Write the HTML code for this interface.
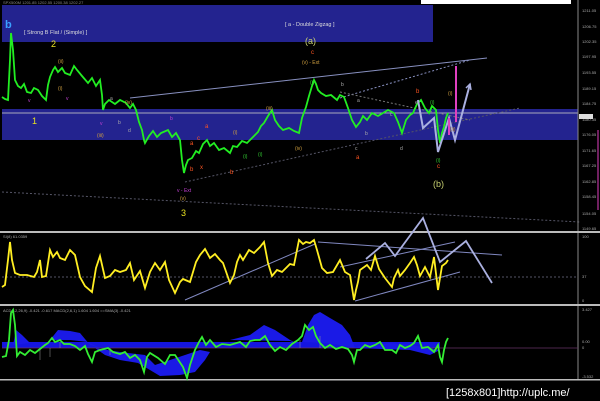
<!DOCTYPE html>
<html><head><meta charset="utf-8"><style>
html,body{margin:0;padding:0;background:#000;width:600px;height:401px;overflow:hidden}
svg{display:block}
text{font-family:"Liberation Sans",sans-serif}
</style></head><body>
<svg width="600" height="401" viewBox="0 0 600 401" xmlns="http://www.w3.org/2000/svg">
<rect width="600" height="401" fill="#000"/>
<!-- top header text -->
<text x="3" y="4" font-size="4" fill="#888">SPX500M  1201.85 1202.55 1200.38 1202.27</text>
<rect x="421" y="0" width="150" height="4" fill="#fff"/>
<!-- top blue box -->
<rect x="2" y="5" width="431" height="37" fill="#23238f"/>
<!-- blue band -->
<rect x="2" y="109" width="576" height="31" fill="#23238f"/>
<line x1="2" y1="113" x2="578" y2="113" stroke="#aab" stroke-width="1"/>
<!-- trend lines -->
<line x1="130" y1="98" x2="487" y2="58" stroke="#8890c0" stroke-width="1"/>
<line x1="340" y1="98" x2="470" y2="60" stroke="#8890c0" stroke-width="1" stroke-dasharray="2,2"/>
<line x1="2" y1="192" x2="580" y2="222" stroke="#556" stroke-width="1" stroke-dasharray="2,2"/>
<line x1="185" y1="182" x2="520" y2="108" stroke="#556" stroke-width="1" stroke-dasharray="2,2"/>
<line x1="340" y1="92" x2="470" y2="120" stroke="#777" stroke-width="1" stroke-dasharray="2,2"/>
<!-- price -->
<polyline fill="none" stroke="#22ee22" stroke-width="1.8" points="2,97 5,99 8,100 10,60 11,33 13,50 15,80 18,86 21,88 24,84 27,92 31,93 34,88 38,90 42,96 46,100 48,85 50,77 53,70 55,67 58,72 62,68 65,73 70,75 74,66 77,70 82,76 88,83 92,78 96,86 100,80 102,95 103,110 105,104 109,100 115,104 120,100 126,103 130,108 133,104 136,110 139,122 142,130 144,140 145,143 149,136 153,131 157,137 161,133 168,130 172,137 176,133 180,140 182,160 184,173 186,165 188,160 192,158 196,151 199,153 203,144 207,140 210,146 214,143 219,150 224,148 230,153 233,146 237,147 242,141 247,143 253,137 258,132 261,126 264,123 268,116 272,110 275,120 279,126 283,130 289,128 294,131 299,133 302,118 306,107 309,96 312,86 314,80 316,84 318,90 321,93 326,96 331,95 337,100 340,95 344,97 348,108 352,120 356,127 360,122 363,116 367,120 372,113 378,116 383,113 388,110 394,113 398,122 402,133 406,120 410,115 413,113 417,104 421,100 425,108 429,113 432,106 436,110 438,130 440,143 442,133 444,127 446,118 448,113"/>
<!-- projection arrows -->
<polyline fill="none" stroke="#aab0e0" stroke-width="2" points="418,100 423,128 434,118 438,152 449,118 455,140 470,84"/>
<polyline fill="none" stroke="#aab0e0" stroke-width="1.5" points="466,88 470,84 471,90"/>
<line x1="456" y1="66" x2="456" y2="122" stroke="#e040c0" stroke-width="2"/>
<line x1="449" y1="118" x2="449" y2="135" stroke="#e040c0" stroke-width="2"/>
<!-- labels -->
<g font-size="5.5" fill="#ddd">
<text x="24" y="34">[ Strong B Flat / (Simple) ]</text>
<text x="285" y="26">[ a - Double Zigzag ]</text>
</g>
<text x="5" y="28" font-size="11" fill="#3aa0ff" font-weight="bold">b</text>
<text x="51" y="47" font-size="9" fill="#e8e020">2</text>
<text x="32" y="124" font-size="9" fill="#e8e020">1</text>
<text x="181" y="216" font-size="9" fill="#e8e020">3</text>
<text x="305" y="44" font-size="9" fill="#c8d070">(a)</text>
<text x="433" y="187" font-size="9" fill="#c8d070">(b)</text>
<g font-size="6" fill="#ff5522">
<text x="311" y="54">c</text><text x="416" y="93">b</text><text x="437" y="168">c</text>
<text x="205" y="128">a</text><text x="190" y="145">a</text><text x="197" y="140">c</text><text x="190" y="171">b</text><text x="200" y="169">x</text><text x="230" y="174">b</text><text x="356" y="159">a</text>
</g>
<g font-size="5" fill="#d0a040">
<text x="302" y="64">(v) - Ext</text><text x="180" y="200">(v)</text><text x="125" y="104">(iv)</text><text x="266" y="110">(iii)</text><text x="295" y="150">(iv)</text><text x="58" y="63">(ii)</text><text x="58" y="90">(i)</text><text x="97" y="137">(iii)</text><text x="448" y="95">(i)</text><text x="450" y="131">(ii)</text><text x="233" y="134">(i)</text>
</g>
<g font-size="5" fill="#c040d0">
<text x="177" y="192">v - Ext</text><text x="100" y="125">v</text><text x="28" y="102">v</text><text x="66" y="100">v</text><text x="170" y="120">b</text>
</g>
<g font-size="5" fill="#aaa">
<text x="110" y="100">a</text><text x="118" y="124">b</text><text x="128" y="132">d</text><text x="341" y="86">b</text><text x="357" y="102">a</text><text x="365" y="135">b</text><text x="355" y="150">c</text><text x="400" y="150">d</text><text x="390" y="116">c</text><text x="415" y="104">e</text>
</g>
<g font-size="5" fill="#33cc33">
<text x="310" y="84">(i)</text><text x="430" y="104">(i)</text><text x="436" y="162">(i)</text><text x="243" y="158">(i)</text><text x="258" y="156">(i)</text>
</g>
<!-- right axis -->
<line x1="578" y1="0" x2="578" y2="380" stroke="#888" stroke-width="1"/>
<g font-size="4" fill="#aaa">
<text x="582" y="12">1211.05</text><text x="582" y="28">1206.75</text><text x="582" y="43">1202.35</text><text x="582" y="58">1197.95</text><text x="582" y="74">1193.55</text><text x="582" y="90">1189.15</text><text x="582" y="105">1184.75</text><text x="582" y="121">1180.35</text><text x="582" y="136">1176.05</text><text x="582" y="152">1171.65</text><text x="582" y="167">1167.25</text><text x="582" y="183">1162.85</text><text x="582" y="198">1158.45</text><text x="582" y="215">1154.05</text><text x="582" y="230">1149.65</text>
<text x="582" y="238">100</text><text x="582" y="278">37</text><text x="582" y="302">0</text>
<text x="582" y="311">3.427</text><text x="582" y="343">0.00</text><text x="582" y="349">0</text><text x="582" y="378">-3.532</text>
</g>
<rect x="579" y="114" width="14" height="5" fill="#ddd"/>
<line x1="598" y1="130" x2="598" y2="210" stroke="#e040c0" stroke-width="1"/>
<!-- separators -->
<rect x="0" y="231" width="600" height="2" fill="#bbb"/>
<rect x="0" y="304" width="600" height="2" fill="#bbb"/>
<rect x="0" y="379" width="600" height="1.5" fill="#bbb"/>
<!-- RSI panel -->
<text x="3" y="238" font-size="4" fill="#aaa">SI(8) 61.0359</text>
<line x1="2" y1="277" x2="578" y2="277" stroke="#556" stroke-dasharray="2,2"/>
<g stroke="#8088c0" stroke-width="1" fill="none">
<line x1="185" y1="300" x2="315" y2="244"/>
<line x1="318" y1="242" x2="502" y2="255"/>
<line x1="340" y1="267" x2="455" y2="242"/>
<line x1="355" y1="301" x2="460" y2="272"/>
<polyline stroke="#aab0e0" stroke-width="1.8" points="366,259 385,243 395,256 423,218 440,262 466,241 492,283"/>
</g>
<polyline fill="none" stroke="#ffee22" stroke-width="1.8" points="2,287 5,285 8,260 10,242 12,260 15,273 20,275 27,275 34,277 37,272 40,260 42,277 46,276 50,250 53,257 57,252 60,258 65,260 70,250 75,255 80,277 85,286 92,292 96,268 100,256 105,278 110,276 115,270 120,272 126,270 130,263 134,280 140,271 145,288 150,272 155,263 160,270 165,262 169,280 175,293 180,282 183,279 190,282 196,262 200,255 205,249 210,258 215,254 220,260 223,263 230,283 234,275 237,262 240,255 243,260 249,250 254,253 260,247 264,242 268,263 272,276 277,270 282,272 290,264 294,265 299,240 303,244 306,242 310,243 314,240 317,250 322,268 327,273 333,272 340,260 345,272 350,275 354,300 356,290 358,282 360,270 367,265 371,270 375,256 379,269 385,278 392,287 394,278 398,270 400,276 405,270 410,263 414,257 417,265 420,276 425,267 430,277 434,257 438,290 442,266 446,263 448,260"/>
<!-- MACD panel -->
<text x="3" y="312" font-size="4" fill="#aaa">ACD(12,26,9) -0.421 -0.617  MACD(2,6,1) 1.604 1.604  ==SMA(3) -0.421</text>
<rect x="2" y="342" width="438" height="6" fill="#1515e0"/>
<line x1="2" y1="348" x2="578" y2="348" stroke="#636" stroke-width="0.8"/>
<g fill="#1a1ae6">
<path d="M13,345 L16,330 L22,335 L30,343 Z"/>
<path d="M50,340 L58,330 L70,331 L80,333 L90,345 L100,348 L88,342 L70,340 Z"/>
<path d="M95,348 L105,355 L120,360 L138,363 L150,370 L160,376 L180,375 L195,372 L205,360 L210,352 L200,350 L185,355 L170,360 L155,365 L145,355 L120,352 Z"/>
<path d="M230,340 L250,335 L264,325 L275,330 L290,340 L300,345 L290,341 Z"/>
<path d="M302,342 L308,325 L314,315 L320,312 L330,318 L342,325 L350,335 L355,348 L340,345 L325,343 Z"/>
<path d="M355,348 L360,346 L375,345 L390,343 L410,345 L430,348 L440,350 L430,355 L410,350 Z"/>
</g>
<g stroke="#999" stroke-width="0.5">
<line x1="40" y1="348" x2="40" y2="360"/><line x1="50" y1="348" x2="50" y2="357"/><line x1="60" y1="348" x2="60" y2="342"/><line x1="110" y1="348" x2="110" y2="355"/><line x1="300" y1="348" x2="300" y2="340"/><line x1="320" y1="348" x2="320" y2="336"/>
</g>
<polyline fill="none" stroke="#33ee33" stroke-width="1.8" points="2,357 6,356 9,340 11,313 13,310 15,325 17,356 20,352 25,355 30,350 35,353 40,349 45,345 48,343 52,338 55,342 60,340 64,344 70,344 75,346 80,350 85,346 88,354 92,362 95,352 100,350 108,348 113,352 120,354 125,352 130,358 135,355 140,360 144,372 147,357 150,353 158,358 165,364 170,355 175,355 183,367 187,378 190,365 195,350 199,342 202,337 206,345 210,340 216,347 222,344 230,345 240,342 246,347 250,341 255,340 260,340 265,336 270,345 275,351 280,347 286,350 292,344 298,340 302,336 305,325 309,330 313,327 316,336 320,343 325,348 330,345 336,349 342,347 348,349 352,355 354,362 357,350 360,350 365,345 370,347 375,345 380,342 385,350 392,350 396,353 400,345 405,348 410,346 414,343 418,336 422,348 428,347 434,352 438,345 440,357 442,362 444,350 446,342 448,338"/>
<!-- footer -->
<text x="446" y="396" font-size="11" fill="#fff" font-family="Liberation Mono, monospace">[1258x801]http://uplc.me/</text>
</svg>
</body></html>
